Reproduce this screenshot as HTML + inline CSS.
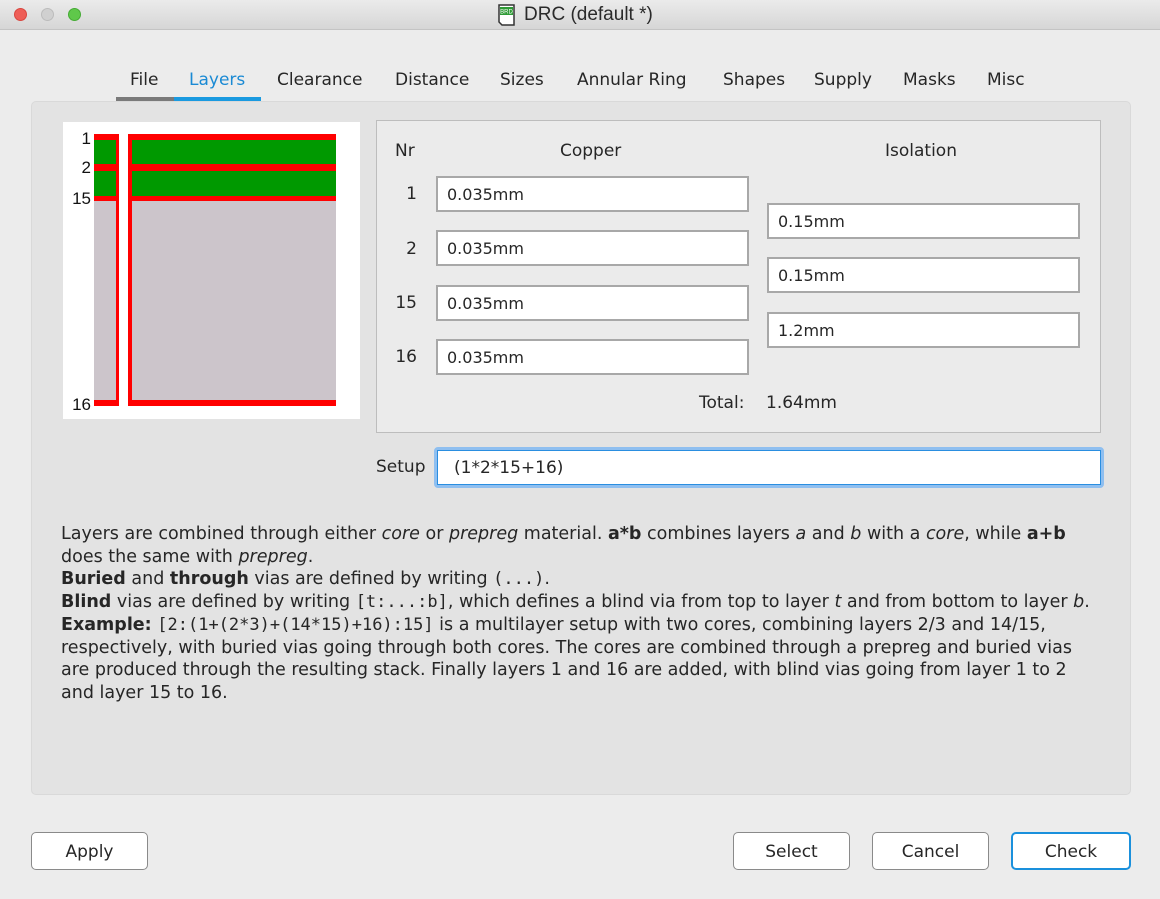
<!DOCTYPE html>
<html><head><meta charset="utf-8"><style>
*{margin:0;padding:0;box-sizing:border-box}
body{width:1160px;height:899px;background:#ececec;font-family:"DejaVu Sans","Liberation Sans",sans-serif;font-size:16px;color:#262626;position:relative;overflow:hidden}
.a{position:absolute;white-space:nowrap}
.title{left:0;top:0;width:1160px;height:30px;background:linear-gradient(#ebebeb,#d6d6d6);border-bottom:1px solid #c4c4c4}
.dot{width:13px;height:13px;border-radius:50%;top:8px}
.tab{top:70px;font-size:17px}
.inp{background:#fff;border:2px solid #a8a8a8;height:36px;padding-left:9px;line-height:33px;font-size:16px}
.btn{background:#fff;border:1.5px solid #8a8a8a;border-radius:5px;height:38px;top:832px;text-align:center;line-height:39px;font-size:17px}
.txt{left:61px;top:523px;font-size:17.5px;line-height:22.7px;white-space:nowrap}
.mono{font-family:"DejaVu Sans Mono","Liberation Mono",monospace;font-size:17px}
</style></head><body>
<div class="a title"></div>
<div class="a dot" style="left:14px;background:#ee5e57;border:1px solid #d9463f"></div>
<div class="a dot" style="left:41px;background:#d0d0d0;border:1px solid #bcbcbc"></div>
<div class="a dot" style="left:68px;background:#5fc84a;border:1px solid #45ab34"></div>
<svg class="a" style="left:497px;top:3px" width="19" height="24" viewBox="0 0 19 24"><path d="M2 2h15v20H5l-3-3z" fill="#fff" stroke="#333" stroke-width="1.5"/><rect x="3" y="4" width="13" height="8" fill="#2e9b35"/><text x="9.5" y="10.5" font-size="6" fill="#fff" text-anchor="middle" font-family="Liberation Sans">BRD</text></svg>
<div class="a" style="left:524px;top:4px;font-size:19px;font-family:'Liberation Sans',sans-serif;color:#2a2a2a">DRC (default *)</div>

<div class="a tab" style="left:130px">File</div>
<div class="a tab" style="left:189px;color:#1a8ad4">Layers</div>
<div class="a tab" style="left:277px">Clearance</div>
<div class="a tab" style="left:395px">Distance</div>
<div class="a tab" style="left:500px">Sizes</div>
<div class="a tab" style="left:577px">Annular Ring</div>
<div class="a tab" style="left:723px">Shapes</div>
<div class="a tab" style="left:814px">Supply</div>
<div class="a tab" style="left:903px">Masks</div>
<div class="a tab" style="left:987px">Misc</div>

<div class="a" style="left:31px;top:101px;width:1100px;height:694px;background:#e3e3e3;border:1px solid #d9d9d9;border-radius:5px"></div>
<div class="a" style="left:116px;top:97px;width:58px;height:4px;background:#7a7a7a"></div>
<div class="a" style="left:174px;top:97px;width:87px;height:4px;background:#1a9ae0"></div>

<div class="a" style="left:63px;top:122px;width:297px;height:297px;background:#fff"></div>
<div class="a" style="left:94px;top:134px;width:25px;height:272px;background:#ccc5cb"></div>
<div class="a" style="left:128px;top:134px;width:208px;height:272px;background:#ccc5cb"></div>
<div class="a" style="left:94px;top:134px;width:242px;height:67px;background:#009900"></div>
<div class="a" style="left:119px;top:134px;width:9px;height:67px;background:#fff"></div>
<div class="a" style="left:94px;top:134px;width:25px;height:6px;background:red"></div>
<div class="a" style="left:128px;top:134px;width:208px;height:6px;background:red"></div>
<div class="a" style="left:94px;top:164px;width:25px;height:7px;background:red"></div>
<div class="a" style="left:128px;top:164px;width:208px;height:7px;background:red"></div>
<div class="a" style="left:94px;top:196px;width:25px;height:5px;background:red"></div>
<div class="a" style="left:128px;top:196px;width:208px;height:5px;background:red"></div>
<div class="a" style="left:94px;top:400px;width:25px;height:6px;background:red"></div>
<div class="a" style="left:128px;top:400px;width:208px;height:6px;background:red"></div>
<div class="a" style="left:116px;top:134px;width:3px;height:272px;background:red"></div>
<div class="a" style="left:128px;top:134px;width:4px;height:272px;background:red"></div>
<div class="a" style="left:60px;top:129px;width:31px;text-align:right;font-family:'Liberation Sans',sans-serif;font-size:17px;color:#111">1</div>
<div class="a" style="left:60px;top:158px;width:31px;text-align:right;font-family:'Liberation Sans',sans-serif;font-size:17px;color:#111">2</div>
<div class="a" style="left:60px;top:189px;width:31px;text-align:right;font-family:'Liberation Sans',sans-serif;font-size:17px;color:#111">15</div>
<div class="a" style="left:60px;top:395px;width:31px;text-align:right;font-family:'Liberation Sans',sans-serif;font-size:17px;color:#111">16</div>

<div class="a" style="left:376px;top:120px;width:725px;height:313px;background:#ebebeb;border:1px solid #bdbdbd"></div>
<div class="a" style="left:395px;top:141px;font-size:17px">Nr</div>
<div class="a" style="left:560px;top:141px;font-size:17px">Copper</div>
<div class="a" style="left:885px;top:141px;font-size:17px">Isolation</div>
<div class="a" style="left:380px;top:184px;width:37px;text-align:right;font-size:17px">1</div>
<div class="a" style="left:380px;top:239px;width:37px;text-align:right;font-size:17px">2</div>
<div class="a" style="left:380px;top:293px;width:37px;text-align:right;font-size:17px">15</div>
<div class="a" style="left:380px;top:347px;width:37px;text-align:right;font-size:17px">16</div>
<div class="a inp" style="left:436px;top:176px;width:313px">0.035mm</div>
<div class="a inp" style="left:436px;top:230px;width:313px">0.035mm</div>
<div class="a inp" style="left:436px;top:285px;width:313px">0.035mm</div>
<div class="a inp" style="left:436px;top:339px;width:313px">0.035mm</div>
<div class="a inp" style="left:767px;top:203px;width:313px">0.15mm</div>
<div class="a inp" style="left:767px;top:257px;width:313px">0.15mm</div>
<div class="a inp" style="left:767px;top:312px;width:313px">1.2mm</div>
<div class="a" style="left:699px;top:393px;font-size:17px">Total:</div>
<div class="a" style="left:766px;top:393px;font-size:17px">1.64mm</div>

<div class="a" style="left:376px;top:457px;font-size:17px">Setup</div>
<div class="a" style="left:434px;top:447px;width:670px;height:41px;border:3px solid #8fbff0;border-radius:4px;background:#fff"></div>
<div class="a" style="left:437px;top:450px;width:664px;height:35px;border:1.5px solid #2a8ee0;background:#fff;padding-left:16px;line-height:34px;font-size:17px">(1*2*15+16)</div>

<div class="a txt">Layers are combined through either <i>core</i> or <i>prepreg</i> material. <b>a*b</b> combines layers <i>a</i> and <i>b</i> with a <i>core</i>, while <b>a+b</b><br>does the same with <i>prepreg</i>.<br><b>Buried</b> and <b>through</b> vias are defined by writing <span class="mono">(...)</span>.<br><b>Blind</b> vias are defined by writing <span class="mono">[t:...:b]</span>, which defines a blind via from top to layer <i>t</i> and from bottom to layer <i>b</i>.<br><b>Example:</b> <span class="mono">[2:(1+(2*3)+(14*15)+16):15]</span> is a multilayer setup with two cores, combining layers 2/3 and 14/15,<br>respectively, with buried vias going through both cores. The cores are combined through a prepreg and buried vias<br>are produced through the resulting stack. Finally layers 1 and 16 are added, with blind vias going from layer 1 to 2<br>and layer 15 to 16.</div>

<div class="a btn" style="left:31px;width:117px">Apply</div>
<div class="a btn" style="left:733px;width:117px">Select</div>
<div class="a btn" style="left:872px;width:117px">Cancel</div>
<div class="a btn" style="left:1011px;width:120px;border:2.5px solid #1a90dc;line-height:37px">Check</div>
</body></html>
